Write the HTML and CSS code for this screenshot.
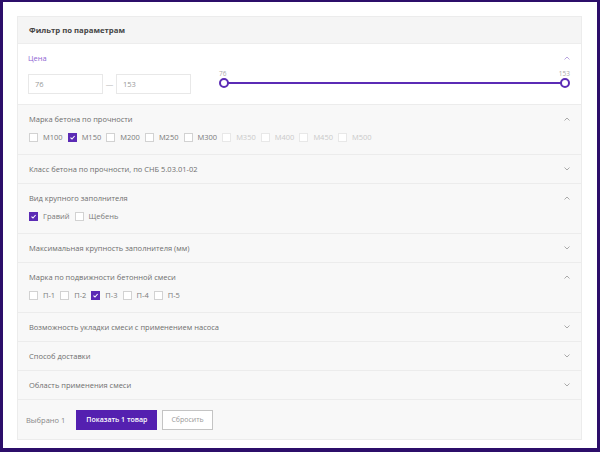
FILE: index.html
```html
<!DOCTYPE html>
<html lang="ru">
<head>
<meta charset="utf-8">
<link rel="stylesheet" href="styles.css">
</head>
<body>
<div class="frame">
  <div class="panel">
    <div class="panel-head">Фильтр по параметрам</div>

    <div class="price">
      <div class="sec-head">
        <span class="price-title">Цена</span>
        <svg class="chev" width="6" height="4" viewBox="0 0 6 4"><path d="M0.5 3.5 L3 1 L5.5 3.5" fill="none" stroke="#b9a6e0" stroke-width="1"/></svg>
      </div>
      <div class="price-row">
        <div class="inputs">
          <div class="inp">76</div>
          <span class="dash">—</span>
          <div class="inp">153</div>
        </div>
        <div class="slider">
          <div class="slabels"><span>76</span><span>153</span></div>
          <div class="track">
            <span class="thumb thumb-l"></span>
            <span class="thumb thumb-r"></span>
          </div>
        </div>
      </div>
    </div>

    <div class="sec open">
      <div class="sec-head"><span>Марка бетона по прочности</span><svg class="chev" width="6" height="4" viewBox="0 0 6 4"><path d="M0.5 3.5 L3 1 L5.5 3.5" fill="none" stroke="#aaa" stroke-width="1"/></svg></div>
      <div class="opts">
        <label class="opt"><span class="cb"></span>М100</label>
        <label class="opt"><span class="cb on"><svg width="7" height="7" viewBox="0 0 7 7"><path d="M1.5 3.6 L3 5 L5.6 2" fill="none" stroke="#fff" stroke-width="1.1"/></svg></span>М150</label>
        <label class="opt"><span class="cb"></span>М200</label>
        <label class="opt"><span class="cb"></span>М250</label>
        <label class="opt"><span class="cb"></span>М300</label>
        <label class="opt off"><span class="cb"></span>М350</label>
        <label class="opt off"><span class="cb"></span>М400</label>
        <label class="opt off"><span class="cb"></span>М450</label>
        <label class="opt off"><span class="cb"></span>М500</label>
      </div>
    </div>

    <div class="sec">
      <div class="sec-head"><span>Класс бетона по прочности, по СНБ 5.03.01-02</span><svg class="chev" width="6" height="4" viewBox="0 0 6 4"><path d="M0.5 0.5 L3 3 L5.5 0.5" fill="none" stroke="#aaa" stroke-width="1"/></svg></div>
    </div>

    <div class="sec open">
      <div class="sec-head"><span>Вид крупного заполнителя</span><svg class="chev" width="6" height="4" viewBox="0 0 6 4"><path d="M0.5 3.5 L3 1 L5.5 3.5" fill="none" stroke="#aaa" stroke-width="1"/></svg></div>
      <div class="opts">
        <label class="opt"><span class="cb on"><svg width="7" height="7" viewBox="0 0 7 7"><path d="M1.5 3.6 L3 5 L5.6 2" fill="none" stroke="#fff" stroke-width="1.1"/></svg></span>Гравий</label>
        <label class="opt"><span class="cb"></span>Щебень</label>
      </div>
    </div>

    <div class="sec">
      <div class="sec-head"><span>Максимальная крупность заполнителя (мм)</span><svg class="chev" width="6" height="4" viewBox="0 0 6 4"><path d="M0.5 0.5 L3 3 L5.5 0.5" fill="none" stroke="#aaa" stroke-width="1"/></svg></div>
    </div>

    <div class="sec open">
      <div class="sec-head"><span>Марка по подвижности бетонной смеси</span><svg class="chev" width="6" height="4" viewBox="0 0 6 4"><path d="M0.5 3.5 L3 1 L5.5 3.5" fill="none" stroke="#aaa" stroke-width="1"/></svg></div>
      <div class="opts">
        <label class="opt"><span class="cb"></span>П-1</label>
        <label class="opt"><span class="cb"></span>П-2</label>
        <label class="opt"><span class="cb on"><svg width="7" height="7" viewBox="0 0 7 7"><path d="M1.5 3.6 L3 5 L5.6 2" fill="none" stroke="#fff" stroke-width="1.1"/></svg></span>П-3</label>
        <label class="opt"><span class="cb"></span>П-4</label>
        <label class="opt"><span class="cb"></span>П-5</label>
      </div>
    </div>

    <div class="sec">
      <div class="sec-head"><span>Возможность укладки смеси с применением насоса</span><svg class="chev" width="6" height="4" viewBox="0 0 6 4"><path d="M0.5 0.5 L3 3 L5.5 0.5" fill="none" stroke="#aaa" stroke-width="1"/></svg></div>
    </div>

    <div class="sec">
      <div class="sec-head"><span>Способ доставки</span><svg class="chev" width="6" height="4" viewBox="0 0 6 4"><path d="M0.5 0.5 L3 3 L5.5 0.5" fill="none" stroke="#aaa" stroke-width="1"/></svg></div>
    </div>

    <div class="sec">
      <div class="sec-head"><span>Область применения смеси</span><svg class="chev" width="6" height="4" viewBox="0 0 6 4"><path d="M0.5 0.5 L3 3 L5.5 0.5" fill="none" stroke="#aaa" stroke-width="1"/></svg></div>
    </div>

    <div class="footer">
      <span class="chosen">Выбрано 1</span>
      <button class="btn-primary">Показать 1 товар</button>
      <button class="btn-reset">Сбросить</button>
    </div>
  </div>
</div>
</body>
</html>
```

FILE: styles.css
```css
* { box-sizing: border-box; }
html, body { margin: 0; padding: 0; }
body {
  font-family: "Open Sans", "Liberation Sans", sans-serif;
  font-size: 7.5px;
  color: #6e6e6e;
  background: #fff;
}
.frame {
  width: 600px;
  height: 452px;
  border-style: solid;
  border-color: #2c0e6a;
  border-width: 2px 3px 4px 3px;
  background: #fff;
  padding: 14px 15px 9px 14px;
}
.panel {
  border: 1px solid #ececec;
  background: #f8f8f8;
}
.panel-head {
  height: 27px;
  display: flex;
  align-items: center;
  padding-left: 11px;
  font-weight: 700;
  font-size: 7.75px;
  color: #444;
  background: #f5f5f5;
  border-bottom: 1px solid #ededed;
}
.price {
  background: #fff;
  padding: 0 10px 10px 10px;
}
.sec-head {
  height: 28px;
  display: flex;
  align-items: center;
  justify-content: space-between;
  padding-right: 1px;
}
.price-title { color: #8f66d3; }
.chev { display: block; }
.price-row {
  display: flex;
  align-items: flex-start;
  margin-top: 2px;
}
.inputs {
  display: flex;
  align-items: center;
}
.inp {
  width: 75px;
  height: 20px;
  border: 1px solid #e8e8e8;
  display: flex;
  align-items: center;
  padding-left: 6px;
  color: #999;
  background: #fff;
}
.dash {
  width: 13px;
  text-align: center;
  color: #bbb;
}
.slider {
  flex: 1;
  margin-left: 28px;
  margin-right: 1px;
  margin-top: -4px;
}
.slabels {
  display: flex;
  justify-content: space-between;
  font-size: 6.5px;
  color: #aaa;
  line-height: 7px;
  margin-bottom: 5px;
}
.track {
  position: relative;
  height: 2px;
  background: #5b2bb5;
  margin: 0 5px;
}
.thumb {
  position: absolute;
  top: -4px;
  width: 10px;
  height: 10px;
  border: 2px solid #5b2bb5;
  border-radius: 50%;
  background: #fff;
}
.thumb-l { left: -5px; }
.thumb-r { right: -5px; }

.sec {
  border-top: 1px solid #ececec;
  padding: 0 10px 0 11px;
}
.sec.open { padding-bottom: 12px; }
.sec.open .sec-head { height: 27px; }
.opts {
  display: flex;
  align-items: center;
  height: 10px;
}
.opt {
  display: flex;
  align-items: center;
  margin-right: 5px;
  color: #7a7a7a;
}
.opt.off { color: #cacaca; }
.cb {
  width: 9px;
  height: 9px;
  border: 1px solid #d2d2d2;
  background: #fff;
  margin-right: 5px;
  display: flex;
  align-items: center;
  justify-content: center;
}
.opt.off .cb { border-color: #e8e8e8; }
.cb.on {
  background: #5b2bb5;
  border-color: #5b2bb5;
}
.footer {
  border-top: 1px solid #ececec;
  height: 40px;
  display: flex;
  align-items: center;
  padding-left: 8px;
}
.chosen { color: #888; margin-right: 11px; }
.btn-primary {
  font-family: inherit;
  font-size: 7px;
  font-weight: 600;
  height: 20px;
  padding: 0 10px;
  border: 0;
  background: #5420b0;
  color: #fff;
  margin-right: 5px;
}
.btn-reset {
  font-family: inherit;
  font-size: 7px;
  height: 20px;
  padding: 0 8px;
  border: 1px solid #c4c4c4;
  background: #fff;
  color: #999;
}
```
